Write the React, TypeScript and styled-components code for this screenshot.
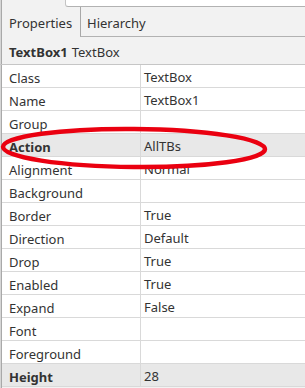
import styled, { createGlobalStyle } from 'styled-components';

const GlobalStyle = createGlobalStyle`
  body {
    margin: 0;
    background: #f2f2f2;
    font-family: 'Noto Sans', 'DejaVu Sans', sans-serif;
  }
`;

const Panel = styled.div`
  position: relative;
  width: 305px;
  height: 388px;
  overflow: hidden;
  background: #f2f2f2;
  color: #333333;
  font-size: 13px;
  box-shadow: inset 1px 0 0 #d6d6d6, inset 2px 0 0 #a9a9a9;
`;

const TopRow = styled.div`
  display: flex;
  height: 7px;
`;

const TopSpacer = styled.div`
  width: 65px;
`;

const TopBox = styled.div`
  flex: 1;
  background: #ffffff;
  border-left: 1px solid #c4c4c4;
  border-bottom: 1px solid #b2b2b2;
  border-bottom-left-radius: 3px;
`;

const TabRow = styled.div`
  display: flex;
  height: 30px;
`;

const Tab = styled.div<{ $active?: boolean; $width: number }>`
  width: ${(p) => p.$width}px;
  display: flex;
  align-items: center;
  padding-left: ${(p) => (p.$active ? 9 : 6)}px;
  padding-top: ${(p) => (p.$active ? 9 : 2)}px;
  box-sizing: border-box;
  border-left: ${(p) => (p.$active ? 'none' : '1px solid #a8a8a8')};
  border-bottom: ${(p) => (p.$active ? 'none' : '1px solid #b2b2b2')};
  ${(p) => (p.$active ? 'margin-top: -7px;' : '')}
`;

const TabFiller = styled.div`
  flex: 1;
  border-bottom: 1px solid #b2b2b2;
`;

const Header = styled.div`
  height: 28px;
  display: flex;
  align-items: center;
  padding-left: 9px;
  padding-top: 2px;
  box-sizing: border-box;
  height: 28px;
  border-bottom: 1px solid #c6c6c6;
  b {
    font-weight: 700;
    margin-right: 4px;
  }
`;

const Table = styled.div`
  display: flex;
  flex-direction: column;
  background: #ffffff;
  margin-left: 2px;
`;

const Row = styled.div<{ $hl?: boolean }>`
  display: flex;
  height: 22px;
  border-bottom: 1px solid #d9d9d9;
  background: ${(p) => (p.$hl ? '#e8e8e8' : '#ffffff')};
  font-weight: ${(p) => (p.$hl ? 700 : 400)};
`;

const Label = styled.div`
  width: 139px;
  flex-shrink: 0;
  display: flex;
  align-items: center;
  padding-left: 7px;
  padding-top: 3px;
  box-sizing: border-box;
  border-right: 1px solid #d9d9d9;
`;

const Value = styled.div`
  flex: 1;
  display: flex;
  align-items: center;
  padding-left: 3px;
  padding-top: 1px;
  font-weight: 400;
`;

const Mark = styled.svg`
  position: absolute;
  left: 0;
  top: 0;
  pointer-events: none;
`;

const rows: [string, string, boolean?][] = [
  ['Class', 'TextBox'],
  ['Name', 'TextBox1'],
  ['Group', ''],
  ['Action', 'AllTBs', true],
  ['Alignment', 'Normal'],
  ['Background', ''],
  ['Border', 'True'],
  ['Direction', 'Default'],
  ['Drop', 'True'],
  ['Enabled', 'True'],
  ['Expand', 'False'],
  ['Font', ''],
  ['Foreground', ''],
  ['Height', '28', true],
];

const App = () => {
  return (
    <>
      <GlobalStyle />
      <Panel>
        <TopRow>
          <TopSpacer />
          <TopBox />
        </TopRow>
        <TabRow>
          <Tab $active $width={80}>Properties</Tab>
          <Tab $width={75}>Hierarchy</Tab>
          <TabFiller />
        </TabRow>
        <Header>
          <b>TextBox1</b> TextBox
        </Header>
        <Table>
          {rows.map(([name, value, hl]) => (
            <Row key={name} $hl={hl}>
              <Label>{name}</Label>
              <Value>{value}</Value>
            </Row>
          ))}
        </Table>
        <Mark width="305" height="388">
          <ellipse
            cx="134"
            cy="148"
            rx="131"
            ry="19"
            fill="none"
            stroke="#ea0010"
            strokeWidth="4.5"
            transform="rotate(0.5 134 148)"
          />
        </Mark>
      </Panel>
    </>
  );
};

export default App;
